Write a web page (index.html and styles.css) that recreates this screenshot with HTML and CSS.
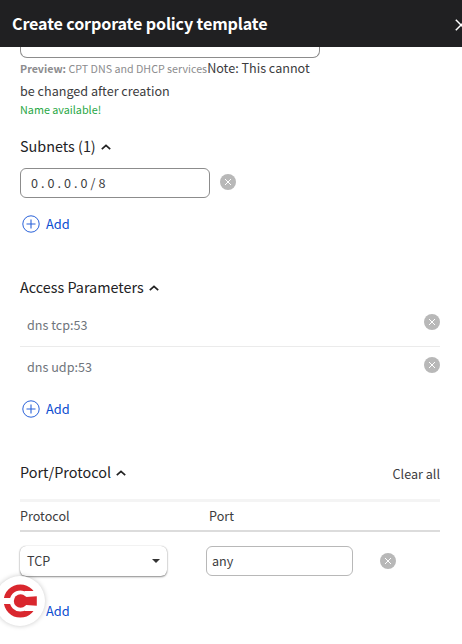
FILE: index.html
```html
<!DOCTYPE html>
<html lang="en">
<head>
<meta charset="utf-8">
<title>Create corporate policy template</title>
<link rel="stylesheet" href="styles.css">
</head>
<body>
<svg class="defs" aria-hidden="true">
  <symbol id="remove" viewBox="0 0 16 16"><circle cx="8" cy="8" r="8" fill="#b8b8b8"/><path d="M5 5l6 6M11 5l-6 6" stroke="#fff" stroke-width="1"/></symbol>
  <symbol id="plus" viewBox="0 0 18 18"><circle cx="9" cy="9" r="8.2" fill="none" stroke="#2a62d9"/><path d="M9 4.5v9M4.5 9h9" stroke="#2a62d9" stroke-width="1.1"/></symbol>
  <symbol id="chevron" viewBox="0 0 10 6"><path d="M.8 5.2L5 1.3l4.2 3.9" fill="none" stroke="#222" stroke-width="1.7"/></symbol>
</svg>
<header class="header">
  <h1 class="title">Create corporate policy template</h1>
  <svg class="close" viewBox="0 0 12 12"><path d="M.8.8l10.4 10.4M11.2.8L.8 11.2" stroke="#fff" stroke-width="1.5"/></svg>
</header>
<main class="content">
  <div class="name-input"></div>
  <p class="note"><span class="preview"><b>Preview:</b> CPT DNS and DHCP services</span><span class="note-text">Note: This cannot<br>be changed after creation</span></p>
  <p class="available">Name available!</p>

  <section class="subnets">
    <h2 class="heading"><span>Subnets (1)</span><svg class="chevron"><use href="#chevron"/></svg></h2>
    <div class="subnet-row">
      <div class="field subnet-field">0.0.0.0/8</div>
      <svg class="remove"><use href="#remove"/></svg>
    </div>
    <a class="add"><svg class="plus"><use href="#plus"/></svg><span>Add</span></a>
  </section>

  <section class="access">
    <h2 class="heading"><span>Access Parameters</span><svg class="chevron"><use href="#chevron"/></svg></h2>
    <div class="param"><span>dns tcp:53</span><svg class="remove"><use href="#remove"/></svg></div>
    <div class="param second"><span>dns udp:53</span><svg class="remove"><use href="#remove"/></svg></div>
    <a class="add"><svg class="plus"><use href="#plus"/></svg><span>Add</span></a>
  </section>

  <section class="ports">
    <div class="ports-top">
      <h2 class="heading"><span>Port/Protocol</span><svg class="chevron"><use href="#chevron"/></svg></h2>
      <span class="clear">Clear all</span>
    </div>
    <div class="table-head"><span>Protocol</span><span>Port</span></div>
    <div class="port-row">
      <div class="select"><span>TCP</span><i class="caret"></i></div>
      <div class="field port-field">any</div>
      <svg class="remove"><use href="#remove"/></svg>
    </div>
    <a class="add"><svg class="plus"><use href="#plus"/></svg><span>Add</span></a>
  </section>
</main>
<div class="badge">
  <svg class="badge-logo" viewBox="0 0 34 34">
    <clipPath id="arcs"><path d="M0 0H34V7H22L17 14H0zM0 20H17L22 27H34V34H0z"/></clipPath>
    <circle cx="17.3" cy="17" r="13.6" fill="none" stroke="#d9272e" stroke-width="6" clip-path="url(#arcs)"/>
    <circle cx="17.6" cy="17" r="6.8" fill="#d9272e"/>
    <path d="M18 13H23L33.8 12.3v9.4L23 21H18z" fill="#d9272e"/>
  </svg>
</div>
</body>
</html>
```
FILE: styles.css
```css
* { box-sizing: border-box; }
body {
  margin: 0;
  height: 644px;
  overflow: hidden;
  background: #fff;
  color: #3c3c3e;
  font: 12.6px/20px "Noto Sans CJK SC", sans-serif;
}
.defs { position: absolute; width: 0; height: 0; }
h1, h2, p { margin: 0; }
svg { display: block; flex: none; }
.header {
  display: flex;
  align-items: center;
  height: 47px;
  padding-left: 12px;
  background: #202022;
  overflow: hidden;
}
.title {
  width: 443px;
  flex: none;
  margin-top: -1px;
  color: #fff;
  font-size: 16.1px;
  font-weight: 600;
  line-height: 24px;
  letter-spacing: -0.13px;
}
.close { width: 12px; height: 12px; margin-top: 3px; }
.content { width: 440px; padding-left: 20px; }
.name-input {
  width: 300px;
  height: 11px;
  border: 1px solid #8c8c8c;
  border-top: 0;
  border-radius: 0 0 7px 7px;
}
.note { height: 43px; margin-top: -1px; line-height: 21.5px; white-space: nowrap; }
.note-text { font-size: 12.6px; }
.preview { color: #8c8c8e; font-size: 10.7px; }
.available { height: 18px; color: #28a745; font-size: 10.8px; line-height: 18px; }
.heading {
  display: flex;
  align-items: center;
  gap: 5px;
  height: 24px;
  color: #222224;
  font-size: 14.4px;
  font-weight: 400;
  line-height: 24px;
}
.chevron { width: 10px; height: 6px; margin-top: 2px; }
.subnets { padding-top: 16px; height: 157px; }
.subnet-row { display: flex; gap: 10px; margin-top: 10px; }
.field { height: 30px; border: 1px solid #8c8c8c; border-radius: 6px; line-height: 28px; }
.subnet-field { width: 190px; padding-left: 10px; letter-spacing: 3px; }
.remove { width: 16px; height: 16px; }
.subnet-row .remove { margin-top: 6px; }
.add { display: flex; align-items: center; gap: 6px; height: 20px; margin: 16px 0 0 2px; color: #0b4dd0; font-size: 12.8px; }
.plus { width: 18px; height: 18px; }
.access { height: 185px; }
.param {
  display: flex;
  justify-content: space-between;
  height: 48px;
  padding: 16px 0 0 7px;
  border-bottom: 1px solid #ebebeb;
  color: #6f757c;
}
.second { height: 42px; padding-top: 10px; border: 0; }
.access .param .remove { margin-top: -1px; }
.access .second .remove { margin-top: 0; }
.access .add { margin-top: 10px; }
.ports-top { display: flex; justify-content: space-between; height: 39px; }
.clear { line-height: 27px; font-size: 12.6px; }
.table-head {
  display: grid;
  grid-template-columns: 189px 1fr;
  height: 33px;
  border-top: 3px solid #f4f4f4;
  border-bottom: 2px solid #dcdcdc;
  line-height: 28px;
}
.port-row { display: flex; align-items: center; padding-top: 14px; }
.select {
  display: flex;
  align-items: center;
  justify-content: space-between;
  width: 147px;
  height: 30px;
  margin-right: 39px;
  padding: 0 7px;
  border-radius: 6px;
  box-shadow: 0 1px 2px rgba(0,0,0,.45), 0 0 1px rgba(0,0,0,.3);
}
.caret { border: 4px solid transparent; border-top-color: #333; border-bottom: 0; }
.port-field { width: 147px; margin-right: 27px; padding-left: 5px; border-color: #b8b8b8; }
.ports .add { margin-top: 25px; }
.badge {
  position: absolute;
  left: -5px;
  top: 576px;
  display: grid;
  place-items: center;
  width: 50px;
  height: 50px;
  border-radius: 50%;
  background: #fff;
  box-shadow: 0 0 5px rgba(0,0,0,.22);
}
.badge-logo { width: 34px; height: 34px; }
```
